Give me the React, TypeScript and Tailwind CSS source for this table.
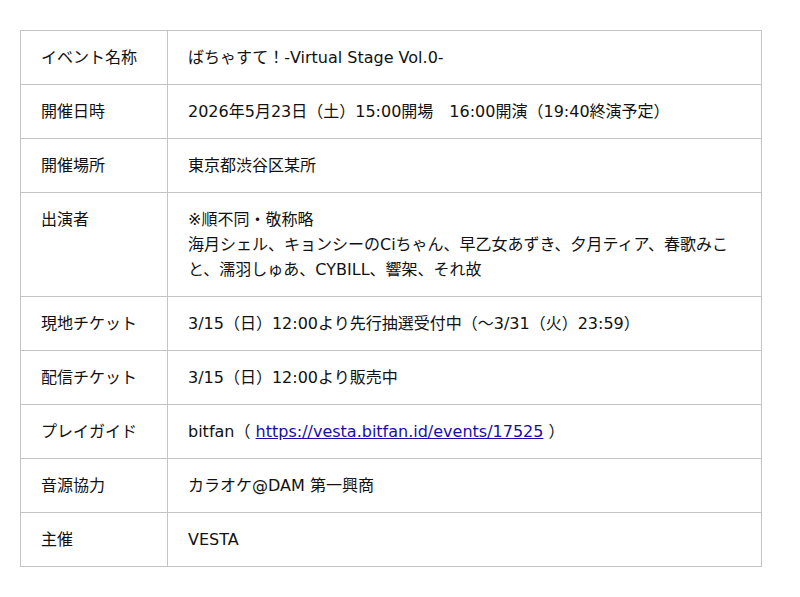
const rows: Array<{ label: string; value: React.ReactNode }> = [
  { label: "イベント名称", value: "ばちゃすて！-Virtual Stage Vol.0-" },
  { label: "開催日時", value: "2026年5月23日（土）15:00開場　16:00開演（19:40終演予定）" },
  { label: "開催場所", value: "東京都渋谷区某所" },
  {
    label: "出演者",
    value: (
      <>
        ※順不同・敬称略
        <br />
        海月シェル、キョンシーのCiちゃん、早乙女あずき、夕月ティア、春歌みこと、濡羽しゅあ、CYBILL、響架、それ故
      </>
    ),
  },
  { label: "現地チケット", value: "3/15（日）12:00より先行抽選受付中（～3/31（火）23:59）" },
  { label: "配信チケット", value: "3/15（日）12:00より販売中" },
  {
    label: "プレイガイド",
    value: (
      <>
        bitfan（{" "}
        <a href="#" className="text-[#1a0dab] underline">
          https://vesta.bitfan.id/events/17525
        </a>{" "}
        ）
      </>
    ),
  },
  { label: "音源協力", value: "カラオケ@DAM 第一興商" },
  { label: "主催", value: "VESTA" },
];

export default function App() {
  return (
    <div className="min-h-[597px] bg-white px-5 pt-[30px] font-['DejaVu_Sans','Noto_Sans_CJK_JP',sans-serif] text-[16px] leading-[25px] text-[#111]">
      <table className="w-[742px] border-collapse border border-[#ddd]">
        <tbody>
          {rows.map((row) => (
            <tr key={row.label}>
              <th className="w-[147px] border border-[#c4c4c4] px-5 py-[14px] text-left align-top font-normal">
                {row.label}
              </th>
              <td className="border border-[#c4c4c4] px-5 py-[14px] align-top">{row.value}</td>
            </tr>
          ))}
        </tbody>
      </table>
    </div>
  );
}
